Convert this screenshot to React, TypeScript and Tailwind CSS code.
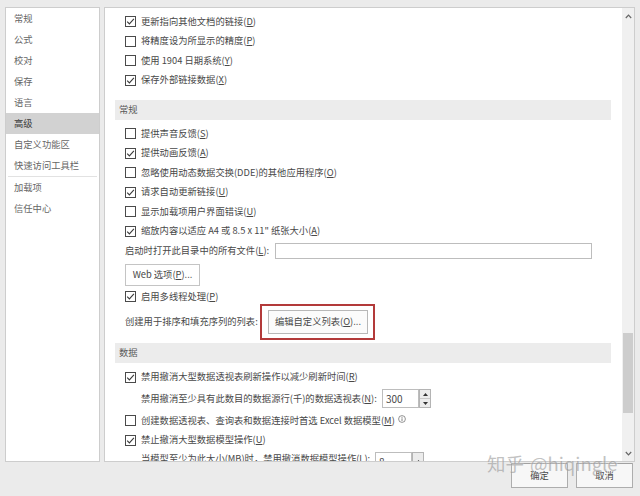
import React from "react";

const FONT = '"Noto Sans CJK SC", "Noto Sans", sans-serif';

function Box({ checked }: { checked?: boolean }) {
  return (
    <span className="w-[11px] h-[11px] border border-[#4a4a4a] bg-white shrink-0 flex items-center justify-center">
      {checked && (
        <svg width="9" height="9" viewBox="0 0 9 9">
          <path d="M1.2 4.6 L3.4 6.9 L7.9 1.8" stroke="#3a3a3a" strokeWidth="1.1" fill="none" />
        </svg>
      )}
    </span>
  );
}

function K({ k }: { k: string }) {
  return (
    <>
      (<span className="underline decoration-[0.5px] underline-offset-[1px]">{k}</span>)
    </>
  );
}

function CheckRow({ checked, children }: { checked?: boolean; children: React.ReactNode }) {
  return (
    <div className="h-[19.5px] flex items-center gap-[5px] pl-[10px] whitespace-nowrap">
      <Box checked={checked} />
      <span>{children}</span>
    </div>
  );
}

function Header({ children }: { children: React.ReactNode }) {
  return (
    <div className="h-[20px] bg-[#ececec] flex items-center pl-[4px] text-[#5a5a5a]">{children}</div>
  );
}

function Spinner({ both = true }: { both?: boolean }) {
  return (
    <div className="w-[12px] h-full border border-[#b4b4b4] bg-[#ececec] flex flex-col">
      <div className="flex-1 flex items-center justify-center border-b border-[#c8c8c8]">
        <svg width="5" height="3" viewBox="0 0 5 3">
          <path d="M0 3 L2.5 0 L5 3Z" fill="#333" />
        </svg>
      </div>
      {both && (
        <div className="flex-1 flex items-center justify-center">
          <svg width="5" height="3" viewBox="0 0 5 3">
            <path d="M0 0 L2.5 3 L5 0Z" fill="#333" />
          </svg>
        </div>
      )}
    </div>
  );
}

const menu = ["常规", "公式", "校对", "保存", "语言", "高级", "自定义功能区", "快速访问工具栏"];

export default function App() {
  return (
    <div
      className="w-[640px] h-[496px] bg-[#ebebeb] relative overflow-hidden text-[9.3px] text-[#484848]"
      style={{ fontFamily: FONT }}
    >
      <div className="flex pt-[7px] pl-[5px] gap-[4px]">
        {/* left nav */}
        <div className="w-[95px] h-[455px] bg-white border border-[#cdcdcd] text-[#666]">
          {menu.map((m) => (
            <div
              key={m}
              className={
                "h-[21px] flex items-center pl-[8px] " + (m === "高级" ? "bg-[#d2d2d2] text-[#3a3a3a]" : "")
              }
            >
              {m}
            </div>
          ))}
          <div className="h-px bg-[#e2e2e2] mx-[2px]" />
          <div className="h-[21px] flex items-center pl-[8px]">加载项</div>
          <div className="h-[21px] flex items-center pl-[8px]">信任中心</div>
        </div>

        {/* right panel */}
        <div className="w-[531px] h-[455px] bg-white border border-[#cdcdcd] flex overflow-hidden">
          <div className="flex-1 pl-[10px] pr-[11px] pt-[4px] overflow-hidden">
            <CheckRow checked>
              更新指向其他文档的链接<K k="D" />
            </CheckRow>
            <CheckRow>
              将精度设为所显示的精度<K k="P" />
            </CheckRow>
            <CheckRow>
              使用 1904 日期系统<K k="Y" />
            </CheckRow>
            <CheckRow checked>
              保存外部链接数据<K k="X" />
            </CheckRow>

            <div className="mt-[10px]">
              <Header>常规</Header>
            </div>
            <div className="mt-[4px]">
              <CheckRow>
                提供声音反馈<K k="S" />
              </CheckRow>
              <CheckRow checked>
                提供动画反馈<K k="A" />
              </CheckRow>
              <CheckRow>
                忽略使用动态数据交换(DDE)的其他应用程序<K k="O" />
              </CheckRow>
              <CheckRow checked>
                请求自动更新链接<K k="U" />
              </CheckRow>
              <CheckRow>
                显示加载项用户界面错误<K k="U" />
              </CheckRow>
              <CheckRow checked>
                缩放内容以适应 A4 或 8.5 x 11" 纸张大小<K k="A" />
              </CheckRow>
              <div className="h-[19.5px] flex items-center pl-[10px] whitespace-nowrap">
                <span className="w-[150px] shrink-0">
                  启动时打开此目录中的所有文件<K k="L" />:
                </span>
                <div className="w-[317px] h-[16px] border border-[#bdbdbd] bg-white" />
              </div>
              <div className="pl-[10px] mt-[3.5px]">
                <div className="w-[75px] h-[22px] border border-[#c4c4c4] bg-white flex items-center justify-center">
                  Web 选项<K k="P" />...
                </div>
              </div>
              <div className="mt-[1px]">
                <CheckRow checked>
                  启用多线程处理<K k="P" />
                </CheckRow>
              </div>
              <div className="h-[30px] flex items-center pl-[10px] whitespace-nowrap">
                <span className="w-[143px] shrink-0">创建用于排序和填充序列的列表:</span>
                <div className="relative">
                  <div className="w-[100px] h-[24px] border border-[#b8b8b8] bg-[#fbfbfb] flex items-center justify-center">
                    编辑自定义列表<K k="O" />...
                  </div>
                  <div className="absolute left-[-8px] right-[-7px] top-[-6px] bottom-[-6px] border-2 border-[#b33a3a]" />
                </div>
              </div>
            </div>

            <div className="mt-[6px]">
              <Header>数据</Header>
            </div>
            <div className="mt-[5px]">
              <CheckRow checked>
                禁用撤消大型数据透视表刷新操作以减少刷新时间<K k="R" />
              </CheckRow>
              <div className="h-[21px] mt-[1px] flex items-center pl-[26px] whitespace-nowrap">
                <span className="w-[241px] shrink-0">
                  禁用撤消至少具有此数目的数据源行(千)的数据透视表<K k="N" />:
                </span>
                <div className="w-[37px] h-[19px] border border-[#bdbdbd] bg-white flex items-center pl-[3px] text-[10px]">
                  300
                </div>
                <div className="h-[19px]">
                  <Spinner />
                </div>
              </div>
              <div className="mt-[2px]">
                <CheckRow>
                  创建数据透视表、查询表和数据连接时首选 Excel 数据模型<K k="M" />
                  <span className="inline-flex ml-[3px] align-[1px]">
                    <svg width="8" height="8" viewBox="0 0 8 8">
                      <circle cx="4" cy="4" r="3.4" stroke="#666" strokeWidth="0.7" fill="none" />
                      <path d="M4 3.3 V6" stroke="#666" strokeWidth="0.8" />
                      <circle cx="4" cy="2.2" r="0.5" fill="#666" />
                    </svg>
                  </span>
                </CheckRow>
              </div>
              <CheckRow checked>
                禁止撤消大型数据模型操作<K k="U" />
              </CheckRow>
              <div className="h-[19.5px] flex items-start pt-[2px] pl-[26px] whitespace-nowrap">
                <span className="w-[234px] shrink-0">
                  当模型至少为此大小(MB)时，禁用撤消数据模型操作<K k="L" />:
                </span>
                <div className="w-[37px] h-[19px] border border-[#bdbdbd] bg-white flex items-center pl-[3px] text-[10px]">
                  8
                </div>
                <div className="h-[19px]">
                  <Spinner both={false} />
                </div>
              </div>
            </div>
          </div>

          {/* scrollbar */}
          <div className="w-[12px] bg-[#f0f0f0] flex flex-col items-center relative">
            <div className="h-[16px] flex items-center justify-center">
              <svg width="7" height="5" viewBox="0 0 7 5">
                <path d="M0.8 4 L3.5 1.2 L6.2 4" stroke="#666" strokeWidth="1.2" fill="none" />
              </svg>
            </div>
            <div className="h-[309px]" />
            <div className="w-[10px] h-[80px] bg-[#cdcdcd]" />
            <div className="flex-1" />
            <div className="h-[16px] flex items-center justify-center">
              <svg width="7" height="5" viewBox="0 0 7 5">
                <path d="M0.8 1 L3.5 3.8 L6.2 1" stroke="#666" strokeWidth="1.2" fill="none" />
              </svg>
            </div>
          </div>
        </div>
      </div>

      {/* bottom buttons */}
      <div className="flex justify-end gap-[8px] pr-[7px] mt-[1px]">
        <div className="w-[57px] h-[25px] border border-[#adadad] bg-[#f7f7f7] flex items-center justify-center">
          确定
        </div>
        <div className="w-[57px] h-[25px] border border-[#adadad] bg-[#f7f7f7] flex items-center justify-center">
          取消
        </div>
      </div>

      {/* watermark */}
      <div
        className="absolute left-[487px] top-[450px] text-[18.5px] text-[#9a9a9a] opacity-60 whitespace-nowrap flex items-center"
        style={{ textShadow: "0 0 1px #fff" }}
      >
        <span>知乎</span>
        <span className="w-[6px] h-px bg-[#9a9a9a]" />
        <span>@hiqingle</span>
        <span className="w-[14px] h-px bg-[#9a9a9a]" />
      </div>
    </div>
  );
}
